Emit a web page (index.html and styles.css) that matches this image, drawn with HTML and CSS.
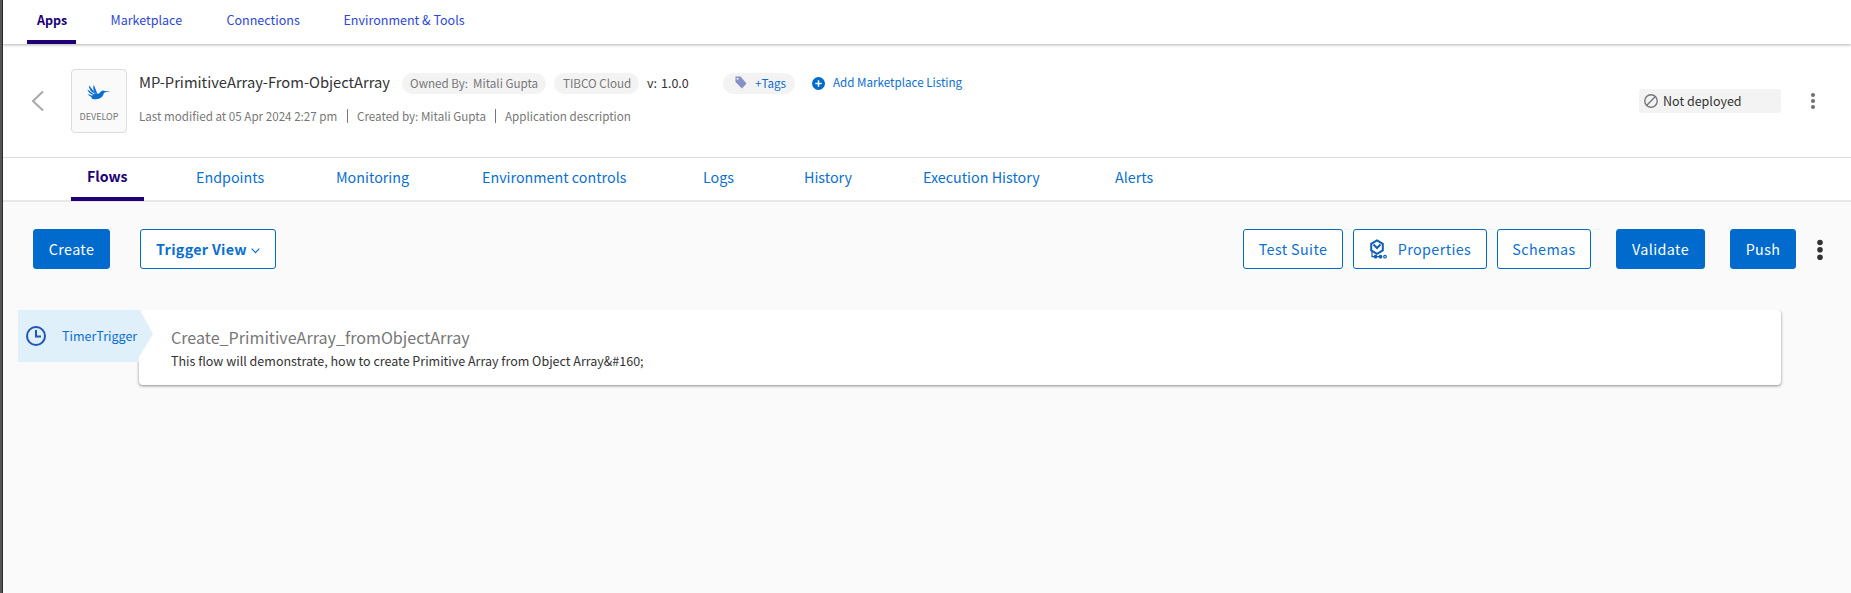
FILE: index.html
```html
<!DOCTYPE html>
<html lang="en">
<head>
<meta charset="utf-8">
<title>Apps</title>
<link rel="stylesheet" href="styles.css">
</head>
<body>
<div class="page">
  <nav class="topnav">
    <a class="top-link active w-apps"><span>Apps</span></a>
    <a class="top-link w-market"><span>Marketplace</span></a>
    <a class="top-link w-conn"><span>Connections</span></a>
    <a class="top-link"><span>Environment &amp; Tools</span></a>
  </nav>

  <header class="app-header">
    <svg class="back" width="14" height="22" viewBox="0 0 14 22"><path d="M12 1.500 2 11l10 9.500" fill="none" stroke="#a8a8a8" stroke-width="2"/></svg>
    <div class="app-icon">
      <svg class="bird" width="26" height="18" viewBox="0 0 26 18"><g fill="#0b6fcf"><path d="M24.800 7.400 18.800 7Q16.800 5.800 15 7.400L12.500 9.800 9 9.500 5 12.500 6 14.800Q10 16 13.500 14.600 17 13 17.800 9.300L19.500 8Z"/><path d="M11.800 11 7.800.8Q6.500 3.500 8 7.200ZM11 11 3 1.600Q2.600 5 6 8ZM10 12 1.300 5.200Q1.800 8 5 10ZM9 13 1.500 9.800Q2.800 12.200 6 13Z"/></g></svg>
      <span class="app-kind">DEVELOP</span>
    </div>
    <div class="app-info">
      <div class="title-row">
        <h1 class="app-name">MP-PrimitiveArray-From-ObjectArray</h1>
        <span class="pill pill-owner"><span>Owned By:</span><span>Mitali Gupta</span></span>
        <span class="pill pill-cloud">TIBCO Cloud</span>
        <span class="version"><span>v:</span><span>1.0.0</span></span>
        <span class="pill pill-tags"><svg width="12" height="13" viewBox="0 0 12 13"><path fill="#8590c4" fill-rule="evenodd" d="M.5.5H5.500L11.500 7.500 7 12.500.5 6ZM2.500 1.800a1 1 0 1 0 .1 0Z"/></svg><span>+Tags</span></span>
        <svg class="plus" width="13" height="13" viewBox="0 0 13 13"><circle cx="6.500" cy="6.500" r="6.500" fill="#006bcc"/><path d="M6.500 3.300v6.400M3.300 6.500h6.400" stroke="#fff" stroke-width="1.500"/></svg>
        <a class="listing">Add Marketplace Listing</a>
      </div>
      <div class="meta-row">
        <span class="m1">Last modified at 05 Apr 2024 2:27 pm</span><i></i>
        <span class="m2">Created by: Mitali Gupta</span><i></i>
        <span>Application description</span>
      </div>
    </div>
    <div class="status"><svg width="14" height="14" viewBox="0 0 14 14"><g fill="none" stroke="#777" stroke-width="1.400"><circle cx="7" cy="7" r="6.200"/><path d="M11.400 2.600 2.600 11.400"/></g></svg><span>Not deployed</span></div>
    <svg class="kebab" width="6" height="18" viewBox="0 0 6 18"><g fill="#727272"><circle cx="3" cy="3" r="2.100"/><circle cx="3" cy="9" r="2.100"/><circle cx="3" cy="15" r="2.100"/></g></svg>
  </header>

  <nav class="tabs">
    <a class="tab active t1"><span>Flows</span></a>
    <a class="tab t2"><span>Endpoints</span></a>
    <a class="tab t3"><span>Monitoring</span></a>
    <a class="tab t4"><span>Environment controls</span></a>
    <a class="tab t5"><span>Logs</span></a>
    <a class="tab t6"><span>History</span></a>
    <a class="tab t7"><span>Execution History</span></a>
    <a class="tab"><span>Alerts</span></a>
  </nav>

  <main class="content">
    <div class="toolbar">
      <button class="btn solid b-create">Create</button>
      <button class="btn b-view"><span>Trigger View</span><svg width="9" height="6" viewBox="0 0 9 6"><path d="M.7.700 4.500 4.700 8.300.7" fill="none" stroke="#0b6fcf" stroke-width="1.200"/></svg></button>
      <div class="spacer"></div>
      <button class="btn b-test">Test Suite</button>
      <button class="btn b-props"><svg width="18" height="20" viewBox="0 0 18 20"><g fill="none" stroke="#0f5fb4" stroke-width="2"><path d="M8 1.400 13.800 4.800v6.600L8 14.800 2.200 11.400V4.800Z"/><path d="M4.500 5.500 8 9l3.500-3.500"/><path d="M3 12.500v5.200h10" stroke-width="1.200"/><circle cx="16" cy="17.700" r="1.300" stroke-width="1.200"/></g><circle cx="6.500" cy="17.700" r="1.900" fill="#0f5fb4"/><circle cx="11.500" cy="17.700" r="1.900" fill="#0f5fb4"/></svg><span>Properties</span></button>
      <button class="btn b-schemas">Schemas</button>
      <button class="btn solid b-validate">Validate</button>
      <button class="btn solid b-push">Push</button>
      <svg class="more" width="6" height="26" viewBox="0 0 6 26"><g fill="#333"><circle cx="3" cy="5.500" r="2.800"/><circle cx="3" cy="12.800" r="2.800"/><circle cx="3" cy="20.200" r="2.800"/></g></svg>
    </div>

    <section class="flow">
      <div class="trigger">
        <svg width="20" height="20" viewBox="0 0 20 20"><g fill="none" stroke="#1f54bd" stroke-width="2"><circle cx="10" cy="10" r="9"/><path d="M10 4v6.500h5"/></g></svg>
        <span>TimerTrigger</span>
      </div>
      <article class="flow-card">
        <h2>Create_PrimitiveArray_fromObjectArray</h2>
        <p>This flow will demonstrate, how to create Primitive Array from Object Array&amp;#160;</p>
      </article>
    </section>
  </main>
</div>
</body>
</html>
```
FILE: styles.css
```css
* { box-sizing: border-box; }
body { margin: 0; background: #fafafa; font-family: "Noto Sans CJK SC", "Noto Sans", sans-serif; color: #333; }
.page { height: 593px; border-left: 2px solid #555; box-shadow: inset 1px 0 #2b2b2b; padding-left: 1px; overflow: hidden; display: flex; flex-direction: column; }
svg { display: block; flex: none; }
span, a, h1, h2, p, button { white-space: nowrap; }

.topnav { position: relative; height: 44px; flex: none; display: flex; padding-left: 24px; background: #fff; box-shadow: 0 1px 3px rgba(0,0,0,.3); }
.top-link { height: 44px; padding-left: 10.500px; font-size: 12.530px; line-height: 40px; color: #2d48d8; }
.top-link.active { padding-left: 10px; color: #200078; font-weight: 700; border-bottom: 4px solid #200078; }
.w-apps { width: 49px; margin-right: 24px; }
.w-market { width: 116px; }
.w-conn { width: 117px; }

.app-header { height: 114px; flex: none; display: flex; align-items: flex-start; background: #fff; border-bottom: 1px solid #dcdcdc; }
.back { margin: 46px 0 0 28px; }
.app-icon { width: 56px; height: 64px; margin: 25px 12px 0 26px; border: 1px solid #dcdcdc; border-radius: 4px; background: #fafafa; display: flex; flex-direction: column; align-items: center; padding-top: 14px; }
.app-kind { font-size: 9px; line-height: 14px; color: #777; margin-top: 8px; }
.app-info { flex: 1; padding-top: 28px; }
.title-row { display: flex; height: 22px; align-items: center; }
.app-name { width: 263px; margin: 0; padding-bottom: 2px; font-size: 14.720px; font-weight: 400; line-height: 20px; color: #333; }
.pill { height: 21px; border-radius: 11px; background: #f3f3f3; display: flex; align-items: center; padding-bottom: 2px; font-size: 11.640px; line-height: 19px; color: #777; }
.pill-owner { width: 144px; padding-left: 8px; gap: 5px; margin-right: 8px; }
.pill-cloud { width: 85px; padding-left: 9px; margin-right: 8px; }
.version { width: 76px; display: flex; gap: 4px; font-size: 12.500px; line-height: 20px; }
.pill-tags { width: 72px; padding-left: 12px; gap: 8px; color: #0b6fcf; }
.pill-tags svg { margin-top: 1px; }
.plus { margin: 0 8px 0 17px; }
.listing { font-size: 11.640px; line-height: 20px; padding-bottom: 2px; color: #0b6fcf; }
.meta-row { display: flex; align-items: center; height: 20px; margin-top: 12px; font-size: 11.640px; line-height: 20px; color: #777; }
.meta-row i { width: 1px; height: 14px; background: #777; margin-right: 9px; }
.m1 { width: 208px; }
.m2 { width: 138px; }
.status { width: 142px; height: 24px; margin: 45px 29px 0 0; border-radius: 3px; background: #f3f3f3; display: flex; align-items: center; padding-left: 5px; gap: 5px; font-size: 12.530px; line-height: 24px; }
.kebab { margin: 48px 35px 0 0; }

.tabs { height: 44px; flex: none; display: flex; padding-left: 68px; background: #fff; border-bottom: 2px solid #e8e8e8; }
.tab { height: 43px; font-size: 14.320px; line-height: 37px; color: #0b6fcf; }
.tab.active { color: #200078; font-weight: 700; padding-left: 16px; font-size: 14.100px; border-bottom: 4px solid #200078; }
.t1 { width: 73px; margin-right: 52px; }
.t2 { width: 140px; }
.t3 { width: 146px; }
.t4 { width: 221px; }
.t5 { width: 101px; }
.t6 { width: 119px; }
.t7 { width: 192px; }

.content { flex: 1; background: #fafafa; padding-top: 27px; }
.toolbar { display: flex; padding: 0 28px 0 30px; height: 40px; }
.btn { height: 40px; padding: 0; border: 1px solid #006bcc; border-radius: 3px; background: #fff; color: #0b6fcf; font-family: inherit; font-size: 14.320px; line-height: 36px; letter-spacing: .4px; display: flex; align-items: center; justify-content: center; }
.solid { background: #006bcc; border-color: #006bcc; color: #fff; }
.b-create { width: 77px; margin-right: 30px; }
.b-view { width: 136px; gap: 4px; font-weight: 700; }
.b-view svg { margin-top: 3px; }
.b-view span { letter-spacing: .3px; }
.spacer { flex: 1; }
.b-test { width: 100px; margin-right: 10px; }
.b-props { width: 134px; margin-right: 10px; gap: 11px; }
.b-schemas { width: 94px; margin-right: 25px; }
.b-validate { width: 89px; margin-right: 25px; }
.b-push { width: 66px; margin-right: 21px; }
.more { margin-top: 8px; }

.flow { display: flex; align-items: flex-start; margin: 41px 70px 0 15px; }
.trigger { position: relative; z-index: 1; width: 135px; height: 52px; margin-right: -14px; background: #dff0fa; clip-path: polygon(0 0, 122px 0, 135px 24px, 121px 47px, 121px 52px, 0 52px); display: flex; align-items: center; padding-left: 8px; gap: 16px; font-size: 12.530px; line-height: 20px; color: #0b6fcf; }
.flow-card { flex: 1; height: 75px; padding: 15px 0 0 32px; background: #fff; border-radius: 4px; box-shadow: 0 1px 3px rgba(0,0,0,.45); clip-path: inset(0 -5px -6px -5px); }
.flow-card h2 { margin: 0; font-size: 16.110px; font-weight: 400; line-height: 24px; color: #777; }
.flow-card p { margin: 2px 0 0; font-size: 12.530px; line-height: 20px; }
```
